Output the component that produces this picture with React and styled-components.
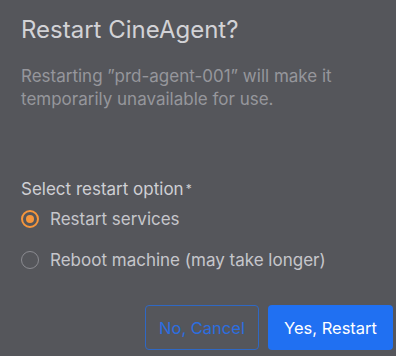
import React, { useState } from 'react';
import styled, { createGlobalStyle } from 'styled-components';

const GlobalStyle = createGlobalStyle`
  html, body {
    margin: 0;
    padding: 0;
    background: #55565b;
  }
  * { box-sizing: border-box; }
`;

const options = [
  { id: 'services', label: 'Restart services' },
  { id: 'reboot', label: 'Reboot machine (may take longer)' },
];

export default function App() {
  const [choice, setChoice] = useState('services');

  return (
    <>
      <GlobalStyle />
      <Dialog>
        <Title>Restart CineAgent?</Title>
        <Description>
          Restarting &rdquo;prd-agent-001&rdquo; will make it temporarily unavailable for use.
        </Description>
        <Field>
          <Label>
            Select restart option
            <Star>*</Star>
          </Label>
          <OptionList>
            {options.map((o) => (
              <Option key={o.id} onClick={() => setChoice(o.id)}>
                <Radio checked={choice === o.id} />
                <OptionText>{o.label}</OptionText>
              </Option>
            ))}
          </OptionList>
        </Field>
        <Footer>
          <GhostButton>No, Cancel</GhostButton>
          <PrimaryButton>Yes, Restart</PrimaryButton>
        </Footer>
      </Dialog>
    </>
  );
}

const Dialog = styled.div`
  width: 396px;
  height: 356px;
  padding: 15px 3px 0 21px;
  display: flex;
  flex-direction: column;
  font-family: Inter, "Liberation Sans", sans-serif;
  background: #55565b;
`;
const Title = styled.h1`
  margin: 0;
  font-size: 24px;
  font-weight: 400;
  line-height: 30px;
  color: #d2d2d6;
`;
const Description = styled.p`
  margin: 20px 0 0;
  width: 350px;
  font-size: 17px;
  line-height: 23px;
  color: #96969c;
`;
const Field = styled.div`
  margin-top: 68px;
`;
const Label = styled.div`
  font-size: 17px;
  line-height: 20px;
  color: #cfcfd4;
`;
const Star = styled.span`
  font-size: 12px;
  vertical-align: top;
  margin-left: 2px;
`;
const OptionList = styled.div`
  display: flex;
  flex-direction: column;
  gap: 19px;
  margin-top: 9px;
`;
const Option = styled.label`
  display: flex;
  align-items: center;
  gap: 11px;
  height: 22px;
  cursor: pointer;
`;
const Radio = styled.span`
  width: 18px;
  height: 18px;
  flex: none;
  border-radius: 50%;
  border: ${(p) => (p.checked ? '2px solid #f7963c' : '1.5px solid #8b8b91')};
  display: flex;
  align-items: center;
  justify-content: center;
  &::after {
    content: '';
    width: 8px;
    height: 8px;
    border-radius: 50%;
    background: #f7963c;
    display: ${(p) => (p.checked ? 'block' : 'none')};
  }
`;
const OptionText = styled.span`
  font-size: 17px;
  color: #c6c6cb;
`;
const Footer = styled.div`
  margin-top: auto;
  margin-bottom: 6px;
  display: flex;
  justify-content: flex-end;
  gap: 9px;
`;
const BaseButton = styled.button`
  height: 45px;
  border-radius: 4px;
  font-family: inherit;
  font-size: 16.5px;
  padding: 0;
  cursor: pointer;
`;
const GhostButton = styled(BaseButton)`
  width: 114px;
  background: transparent;
  border: 1px solid #2f68c4;
  color: #2b6ee0;
`;
const PrimaryButton = styled(BaseButton)`
  width: 125px;
  background: #2070f2;
  border: none;
  color: #ffffff;
`;
